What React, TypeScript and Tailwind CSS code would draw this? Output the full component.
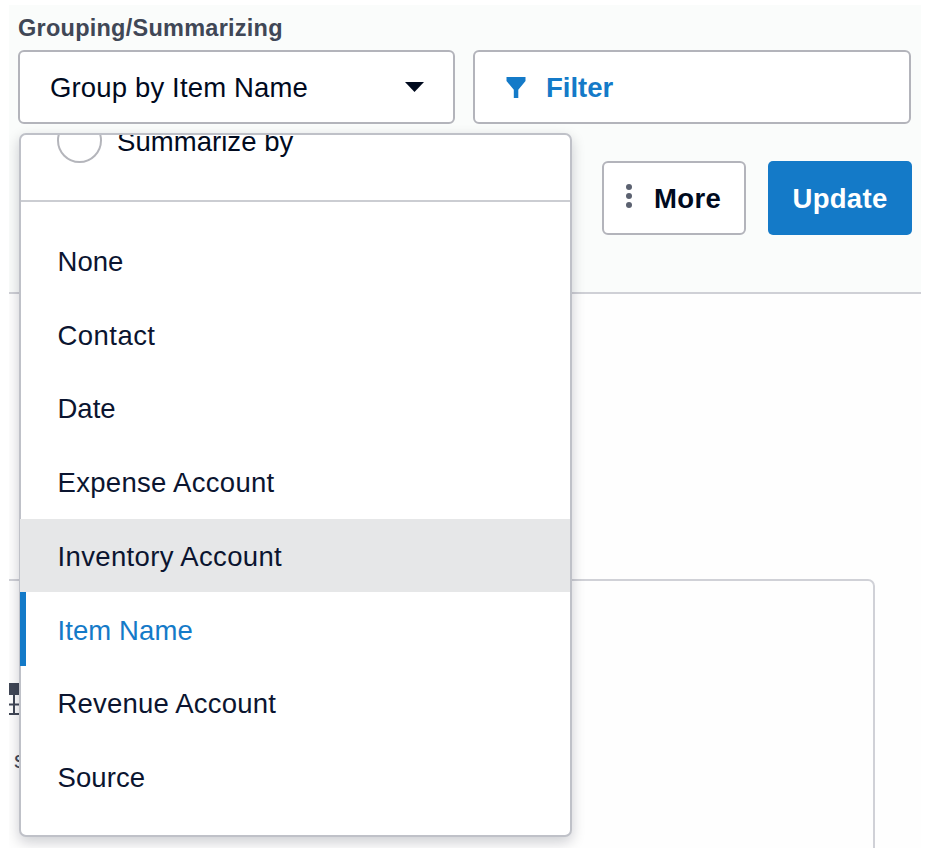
const options = [
  { label: "None", spacing: "tracking-[0.05px]" },
  { label: "Contact", spacing: "tracking-[0.45px]" },
  { label: "Date", spacing: "tracking-[0px]" },
  { label: "Expense Account", spacing: "tracking-[0.3px]" },
  { label: "Inventory Account", spacing: "tracking-[0.35px]" },
  { label: "Item Name", spacing: "tracking-[0.1px]" },
  { label: "Revenue Account", spacing: "tracking-[0.2px]" },
  { label: "Source", spacing: "tracking-[0.1px]" },
];

const HOVERED = "Inventory Account";
const SELECTED = "Item Name";

function optionClass(label: string) {
  if (label === HOVERED) return "border-transparent bg-[#e6e7e8] text-[#0b1530]";
  if (label === SELECTED) return "border-[#147ac8] text-[#147ac8]";
  return "border-transparent text-[#0b1530]";
}

function GroupMenu() {
  return (
    <div className="absolute top-[128px] left-[10px] flex h-[704px] w-[553px] flex-col rounded-[7px] border-2 border-[#bfc1c8] bg-white shadow-[0_5px_14px_rgba(0,10,30,0.2)]">
      <div className="flex h-[67px] shrink-0 items-start overflow-hidden border-b-2 border-[#cbcdd2] pl-[36px]">
        <span className="-mt-[17px] size-[45px] shrink-0 rounded-full border-2 border-[#b4b5bb]" />
        <span className="-mt-[11px] ml-[15px] text-[27.5px] leading-[36px] tracking-[0.05px]">Summarize by</span>
      </div>
      <ul className="-ml-px pt-[22px]">
        {options.map(({ label, spacing }) => (
          <li
            key={label}
            className={`flex h-[73.7px] items-center border-l-[6px] pt-[2px] pl-[31.5px] text-[27.5px] leading-none ${spacing} ${optionClass(label)}`}
          >
            {label}
          </li>
        ))}
      </ul>
    </div>
  );
}

export default function App() {
  return (
    <div className="h-[858px] w-[934px] bg-white pt-[5px] pl-[9px] font-['Liberation_Sans',Arial,sans-serif] text-[#000a1e]">
      <main className="relative h-[843px] w-[912px] overflow-hidden bg-[#fefefe]">
        <header className="h-[289px] border-b-2 border-[#cfd0d6] bg-[#fafcfb] px-[9px] pt-[8px]">
          <div className="h-[37px] pt-px text-[23.5px] leading-[29px] font-bold tracking-[0.25px] text-[#404756]">
            Grouping/Summarizing
          </div>
          <div className="flex gap-[18px]">
            <button className="flex h-[74px] w-[437px] items-center justify-between rounded-[6px] border-2 border-[#b3b4bb] bg-white pt-[2px] pr-[29px] pl-[30px] text-[27.5px] tracking-[0.15px]">
              <span>Group by Item Name</span>
              <svg className="-mt-[2px]" width="19" height="10" viewBox="0 0 19 10">
                <path d="M0 0h19L9.500 10z" fill="currentColor" />
              </svg>
            </button>
            <button className="flex h-[74px] w-[438px] items-center rounded-[6px] border-2 border-[#b3b4bb] bg-white pt-[2px] pl-[31px] text-[27.5px] font-bold text-[#147ac8]">
              <svg className="mr-[20px] -mt-[1px]" width="20" height="21" viewBox="0 0 20 21">
                <path d="M.5 0h19v4l-7.200 8.700V21H7.800v-8.300L.5 4z" fill="currentColor" />
              </svg>
              <span>Filter</span>
            </button>
          </div>
          <div className="mt-[37px] flex justify-end gap-[22px]">
            <button className="flex h-[74px] w-[144px] items-center rounded-[6px] border-2 border-[#b3b4bb] bg-white pt-[2px] pl-[22px] text-[27.5px] font-bold tracking-[0.4px]">
              <svg className="mr-[22px] -mt-[6px]" width="6" height="24" viewBox="0 0 6 24" fill="#5b6170">
                <circle cx="3" cy="3" r="3" />
                <circle cx="3" cy="12" r="3" />
                <circle cx="3" cy="21" r="3" />
              </svg>
              <span>More</span>
            </button>
            <button className="flex h-[74px] w-[144px] items-center justify-center rounded-[5px] bg-[#147ac8] pt-[2px] text-[27.5px] font-bold tracking-[0.3px] text-white">
              Update
            </button>
          </div>
        </header>

        <section className="mt-[285px] -ml-[20px] h-[300px] w-[886px] rounded-[7px] border-2 border-[#d0d1d7] pt-[102px] pl-[15px]">
          <svg width="36" height="33" viewBox="0 0 36 33" fill="none" stroke="#404756" strokeWidth="2">
            <path d="M0 6h36" strokeWidth="12" />
            <path d="M8 12v20M19 12v20M0 21.500h36M0 31h36" />
          </svg>
          <div className="mt-[31px] ml-[8px] text-[23px] leading-[26px] text-[#404756]">s</div>
        </section>
        <GroupMenu />
      </main>
    </div>
  );
}
